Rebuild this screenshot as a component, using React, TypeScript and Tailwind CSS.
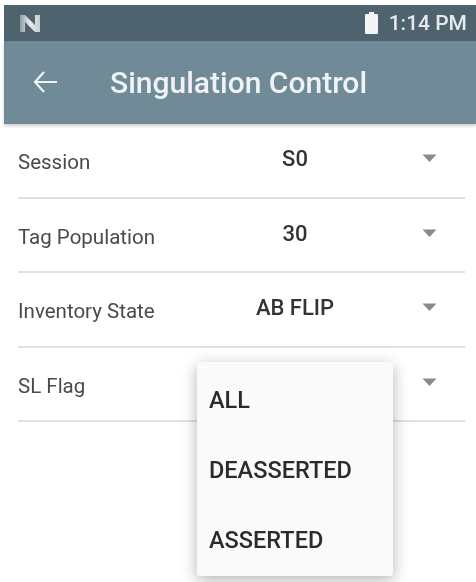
const rows = [
  { label: "Session", value: "S0" },
  { label: "Tag Population", value: "30" },
  { label: "Inventory State", value: "AB FLIP" },
  { label: "SL Flag", value: "" },
];

function Caret() {
  return (
    <svg width="15" height="8" viewBox="0 0 15 8" className="block mt-[-12px]">
      <path d="M0.5 0.5h14L7.5 8z" fill="#8a8a8a" />
    </svg>
  );
}

export default function App() {
  return (
    <div className="relative w-[476px] h-[582px] overflow-hidden bg-white pt-[5px] pl-[4px] font-['Roboto',sans-serif] blur-[0.5px]">
      <div className="flex items-center justify-between h-[36px] bg-[#4e636e] pl-[15px] pr-[9px]">
        <svg width="22" height="19" viewBox="0 0 22 19">
          <defs>
            <linearGradient id="n" x1="0" x2="1" y1="0" y2="0">
              <stop offset="0" stopColor="#8f9ea6" />
              <stop offset="0.5" stopColor="#e8ecee" />
              <stop offset="1" stopColor="#c4ccd0" />
            </linearGradient>
          </defs>
          <path d="M1 1h5l10 10V1h5v17h-5L6 8v10H1z" fill="url(#n)" />
        </svg>
        <div className="flex items-center gap-[10px]">
          <svg width="15" height="22" viewBox="0 0 15 22">
            <path d="M5 0h5v2h3a1 1 0 0 1 1 1v18a1 1 0 0 1-1 1H2a1 1 0 0 1-1-1V3a1 1 0 0 1 1-1h3z" fill="#f3f5f6" />
          </svg>
          <span className="text-[21px] leading-none font-medium text-[#e6eaec]">1:14 PM</span>
        </div>
      </div>
      <div className="flex items-center h-[83px] bg-[#718a97] shadow-[0_2px_3px_rgba(0,0,0,0.2)] pl-[29px] pb-[1px]">
        <svg width="24" height="22" viewBox="0 0 24 22" fill="none" stroke="#eef2f4" strokeWidth="2.2">
          <path d="M24 11H2M11 1 2 11l9 10" />
        </svg>
        <span className="ml-[53px] mt-[2px] text-[30px] font-medium text-[#f0f3f5] leading-none">Singulation Control</span>
      </div>
      <div className="pl-[14px] pr-[11px]">
        {rows.map((r) => (
          <div key={r.label} className="relative h-[74.5px] flex items-center border-b-2 border-[#e0e0e0] pt-[4px] pr-[28px]">
            <span className="w-[165px] shrink-0 text-[20.5px] text-[#4a4a4a] leading-none">{r.label}</span>
            <span className="w-[224px] shrink-0 text-center text-[22px] font-medium text-[#333333] leading-none mt-[-6px]">{r.value}</span>
            <span className="ml-auto pt-[8px]"><Caret /></span>
          </div>
        ))}
      </div>
      <div className="absolute left-[197px] top-[362px] w-[196px] h-[214px] bg-[#fafafa] rounded-[3px] shadow-[0_4px_16px_rgba(0,0,0,0.3)] flex flex-col justify-around pl-[12px] pt-[4px]">
        {["ALL", "DEASSERTED", "ASSERTED"].map((t) => (
          <span key={t} className="text-[23.5px] font-medium text-[#2b2b2b] leading-none">{t}</span>
        ))}
      </div>
    </div>
  );
}
